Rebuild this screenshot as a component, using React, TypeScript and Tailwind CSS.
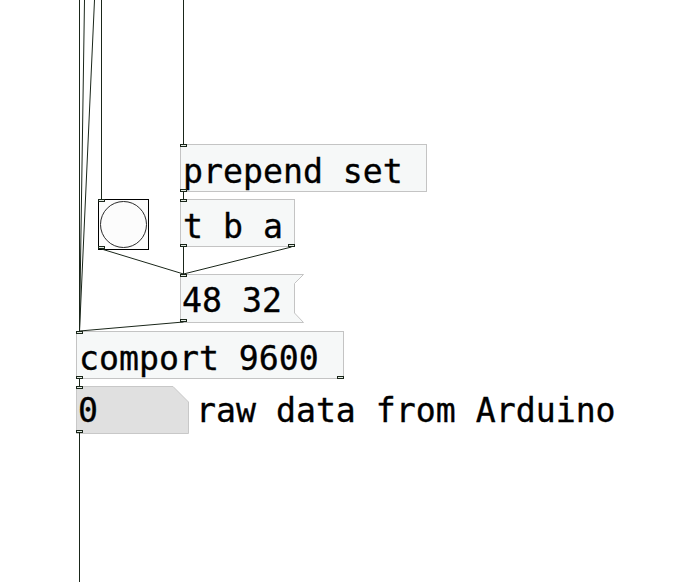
const mono = "font-['DejaVu_Sans_Mono','Liberation_Mono',monospace] [-webkit-text-stroke:0.35px_black]";

type Box = { x: number; y: number; w: number; h: number; text: string };

const objects: Box[] = [
  { x: 180, y: 144, w: 247, h: 48, text: "prepend set" },
  { x: 180, y: 199, w: 115, h: 48, text: "t b a" },
  { x: 76, y: 331, w: 268, h: 48, text: "comport 9600" },
];

// [x, y] pairs for connections
const wires: [number, number, number, number][] = [
  [79.5, 0, 79.5, 331],
  [84.5, 0, 79.5, 331],
  [94.5, 0, 79.5, 331],
  [101.5, 0, 101.5, 199],
  [183.5, 0, 183.5, 144],
  [183.5, 192, 183.5, 199],
  [183.5, 247, 183.5, 274],
  [291.5, 247, 183.5, 274],
  [101.5, 249, 183.5, 274],
  [183.5, 322, 79.5, 331],
  [79.5, 379, 79.5, 386],
  [79.5, 433, 79.5, 582],
];

// inlets / outlets: left x, top y
const iolets: [number, number][] = [
  [180, 144], [180, 189],
  [180, 199], [180, 244], [288, 244],
  [98, 199], [98, 246],
  [180, 274], [180, 319],
  [76, 331], [76, 376], [337, 376],
  [76, 386], [76, 430],
];

export default function App() {
  return (
    <div className="relative w-[692px] h-[582px] bg-white overflow-hidden">
      {/* message + number box shapes */}
      <svg className="absolute inset-0" width={692} height={582}>
        <polygon
          points="180.5,274.5 303.5,274.5 294.5,283.5 294.5,313 303.5,322.5 180.5,322.5"
          fill="#f6f8f8"
          stroke="#c4c4c4"
        />
        <polygon
          points="76.5,386.5 173,386.5 188.5,402 188.5,433.5 76.5,433.5"
          fill="#e0e0e0"
          stroke="#c8c8c8"
        />
      </svg>

      {objects.map((o) => (
        <div
          key={o.text}
          className={`absolute border border-[#c4c4c4] bg-[#f6f8f8] text-[33.2px] leading-[38px] pt-[8px] pl-[2px] text-black whitespace-pre ${mono}`}
          style={{ left: o.x, top: o.y, width: o.w, height: o.h }}
        >
          {o.text}
        </div>
      ))}

      <div
        className={`absolute left-[180px] top-[274px] h-[48px] text-[33.2px] leading-[38px] pt-[8px] pl-[2px] text-black whitespace-pre ${mono}`}
      >
        48 32
      </div>
      <div
        className={`absolute left-[76px] top-[386px] h-[48px] text-[33.2px] leading-[38px] pt-[6px] pl-[2px] text-black whitespace-pre ${mono}`}
      >
        0
      </div>
      <div
        className={`absolute left-[196px] top-[386px] text-[33.2px] leading-[38px] pt-[6px] text-black whitespace-pre ${mono}`}
      >
        raw data from Arduino
      </div>

      {/* bang */}
      <div className="absolute left-[98px] top-[199px] w-[51px] h-[51px] border border-black bg-[#fcfcfc] flex items-center justify-center">
        <div className="w-[47px] h-[47px] rounded-full border border-[#2a2a2a]" />
      </div>

      {/* wires and iolets */}
      <svg className="absolute inset-0 pointer-events-none" width={692} height={582}>
        {wires.map(([x1, y1, x2, y2], i) => (
          <line key={i} x1={x1} y1={y1} x2={x2} y2={y2} stroke="#1a261a" strokeWidth={1} />
        ))}
        {iolets.map(([x, y], i) => (
          <rect key={i} x={x + 0.5} y={y + 0.5} width={6} height={2} fill="#e4ece4" stroke="#1a261a" />
        ))}
      </svg>
    </div>
  );
}
